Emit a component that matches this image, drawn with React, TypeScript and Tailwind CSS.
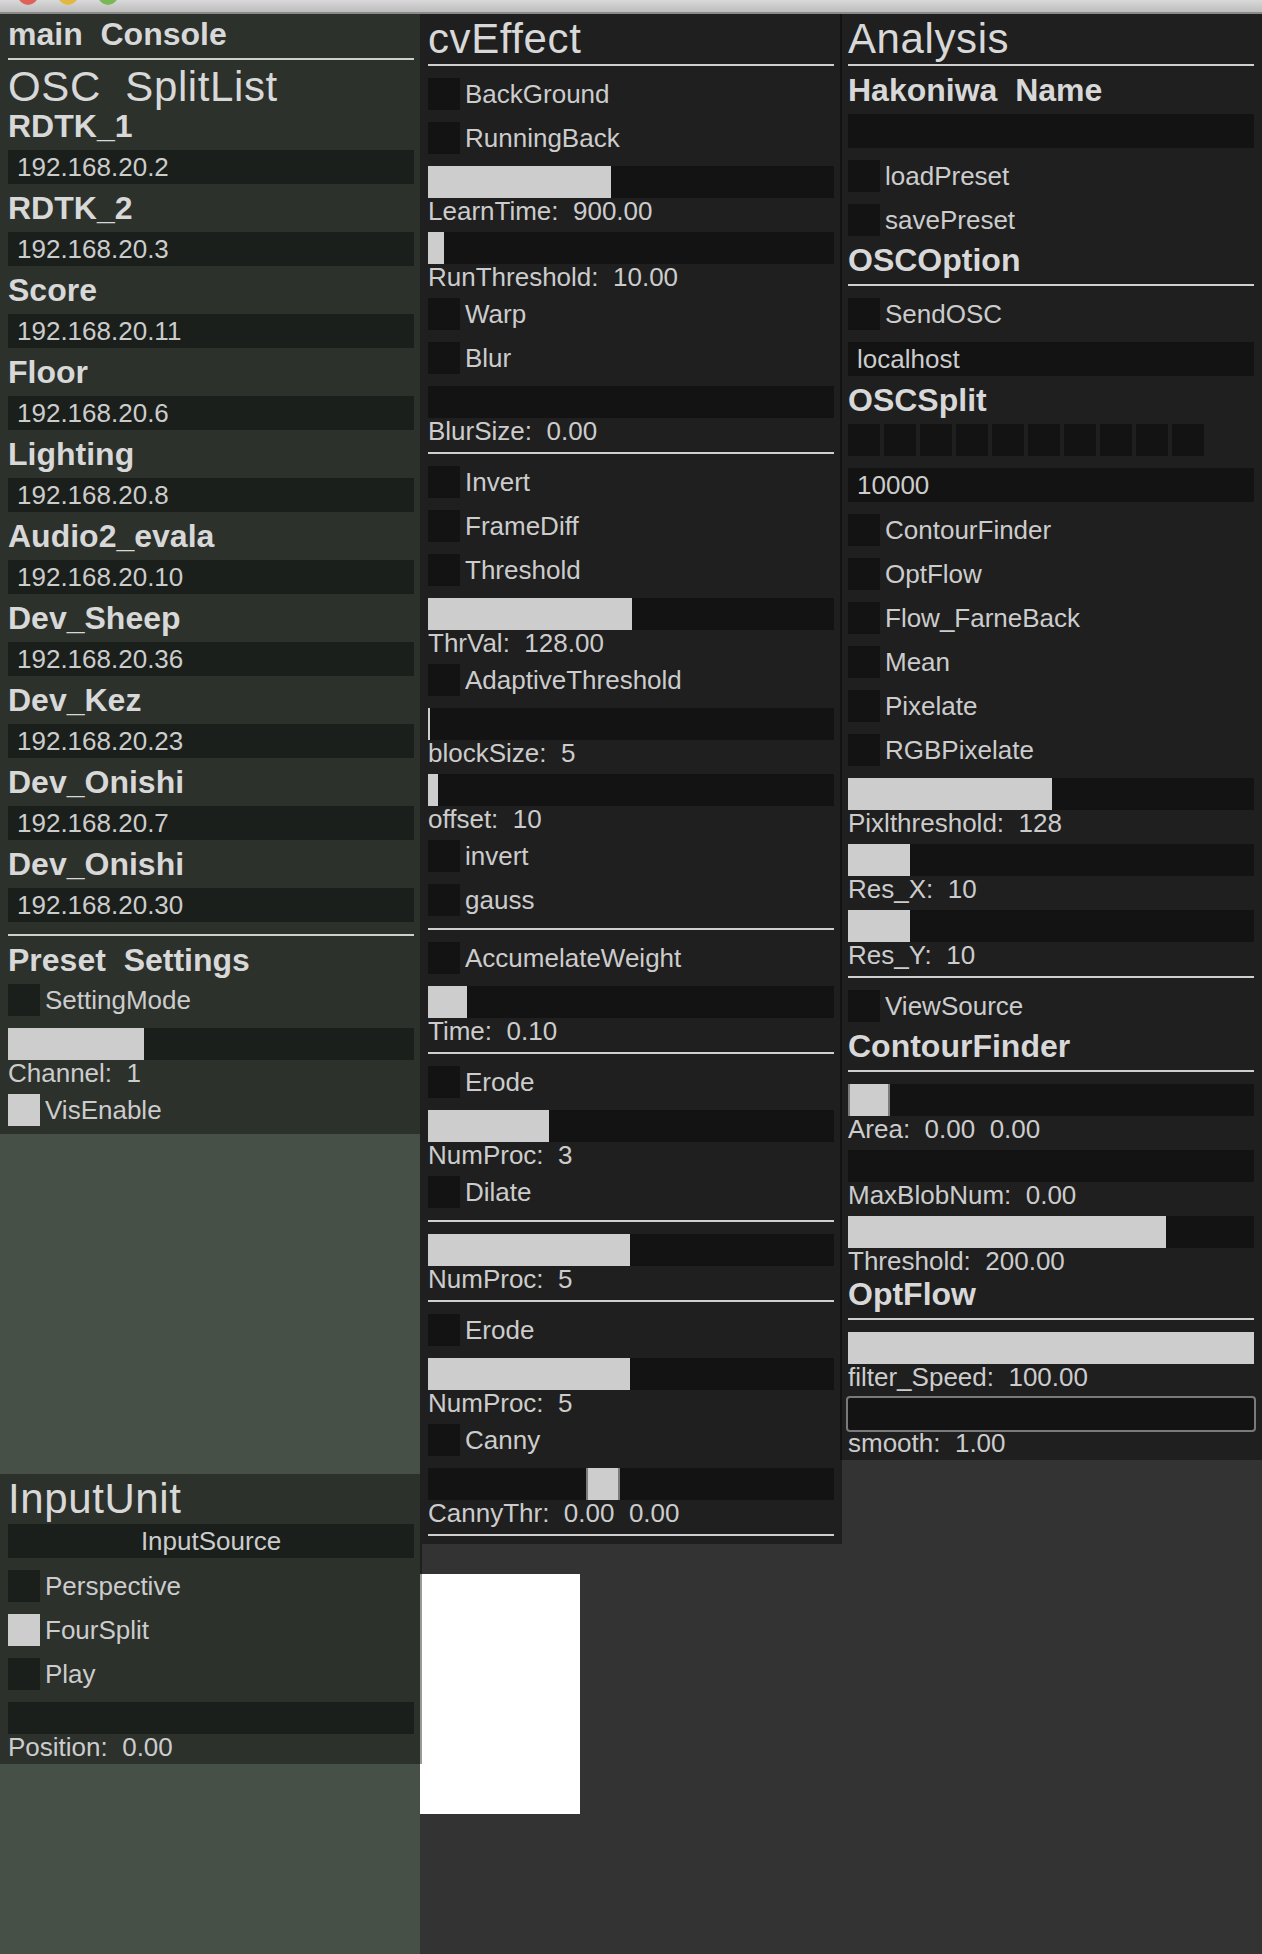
import React from "react";

type Tone = "green" | "dark";

const boxTone = (tone: Tone) => (tone === "green" ? "bg-[#1b1f1b]" : "bg-[#131313]");

const Sep = () => <div className="h-[2px] bg-[#cfcfcf]" />;

const BigTitle = ({ text, h }: { text: string; h: string }) => (
    <div className={`${h} whitespace-pre text-[42px] tracking-[0.6px] text-[#d8d8d8]`}>{text}</div>
);

const Head = ({ text, h }: { text: string; h: string }) => (
    <div className={`${h} whitespace-pre text-[32px] font-bold text-[#d8d8d8]`}>{text}</div>
);

const Toggle = ({ label, on = false, tone }: { label: string; on?: boolean; tone: Tone }) => (
    <div className="flex h-8 items-center gap-[5px]">
        <div className={`h-8 w-8 shrink-0 ${on ? "bg-[#cdcdcd]" : boxTone(tone)}`} />
        <span className="whitespace-pre text-[26px] leading-8">{label}</span>
    </div>
);

const Field = ({ value, tone, center = false }: { value: string; tone: Tone; center?: boolean }) => (
    <div className={`h-[34px] px-[9px] text-[26px] leading-[34px] ${boxTone(tone)} ${center ? "text-center" : ""}`}>
        {value}
    </div>
);

const Slider = ({ label, fill, tone, focus = false }: { label: string; fill: number; tone: Tone; focus?: boolean }) => (
    <div className="flex flex-col">
        <div className={`h-8 ${boxTone(tone)} ${focus ? "rounded-[2px] outline-2 outline-[#7a7a7a]" : ""}`}>
            <div className="h-full bg-[#cdcdcd]" style={{ width: fill }} />
        </div>
        <div className="h-[22px] whitespace-pre text-[26px] leading-[26px]">{label}</div>
    </div>
);

const Range = ({ label, left, width }: { label: string; left: number; width: number }) => (
    <div className="flex flex-col">
        <div className="relative h-8 bg-[#131313]">
            <div className="absolute top-0 h-8 border-x-2 border-[#7c7c7c] bg-[#cdcdcd]" style={{ left, width }} />
        </div>
        <div className="h-[22px] whitespace-pre text-[26px] leading-[26px]">{label}</div>
    </div>
);

const hosts = [
    ["RDTK_1", "192.168.20.2"],
    ["RDTK_2", "192.168.20.3"],
    ["Score", "192.168.20.11"],
    ["Floor", "192.168.20.6"],
    ["Lighting", "192.168.20.8"],
    ["Audio2_evala", "192.168.20.10"],
    ["Dev_Sheep", "192.168.20.36"],
    ["Dev_Kez", "192.168.20.23"],
    ["Dev_Onishi", "192.168.20.7"],
    ["Dev_Onishi", "192.168.20.30"],
];

const TitleBar = () => (
    <div className="flex h-[14px] shrink-0 items-start gap-5 overflow-hidden border-b-2 border-[#8a8a8a] bg-linear-to-b from-[#d9d9d9] to-[#bdbdbd] pl-[18px]">
        <div className="-mt-[15px] h-5 w-5 shrink-0 rounded-full bg-[#e0605a]" />
        <div className="-mt-[15px] h-5 w-5 shrink-0 rounded-full bg-[#e2b83f]" />
        <div className="-mt-[15px] h-5 w-5 shrink-0 rounded-full bg-[#78b857]" />
    </div>
);

const leftPanel = "relative z-10 w-[422px] border-r-2 border-black/40 bg-[#2c312c] bg-clip-padding pl-2 pr-1.5 pb-2";

const MainConsole = () => (
    <div className={`${leftPanel} flex flex-col`}>
        <div className="h-10 whitespace-pre text-[32px] font-bold leading-10 text-[#d8d8d8]">main  Console</div>
        <div className="mt-1">
            <Sep />
        </div>
        <BigTitle text="OSC  SplitList" h="h-[54px] leading-[54px]" />
        <div className="flex flex-col gap-3">
            {hosts.map(([name, ip], i) => (
                <div key={i} className="flex flex-col">
                    <div className="h-6 text-[32px] font-bold leading-6 text-[#d8d8d8]">{name}</div>
                    <div className="mt-3">
                        <Field value={ip} tone="green" />
                    </div>
                </div>
            ))}
        </div>
        <div className="mt-3">
            <Sep />
        </div>
        <Head text="Preset  Settings" h="h-12 leading-[48px]" />
        <Toggle label="SettingMode" tone="green" />
        <div className="mt-3">
            <Slider label="Channel:  1" fill={136} tone="green" />
        </div>
        <div className="mt-3">
            <Toggle label="VisEnable" on tone="green" />
        </div>
    </div>
);

const InputUnit = () => (
    <div className={`${leftPanel} mt-[340px] flex flex-col`}>
        <BigTitle text="InputUnit" h="h-[50px] leading-[50px]" />
        <Field value="InputSource" tone="green" center />
        <div className="mt-3 flex flex-col gap-3">
            <Toggle label="Perspective" tone="green" />
            <Toggle label="FourSplit" on tone="green" />
            <Toggle label="Play" tone="green" />
            <Slider label="Position:  0.00" fill={0} tone="green" />
        </div>
    </div>
);

const CvEffect = () => (
    <div className="relative z-10 flex w-[422px] flex-col border-r-2 border-black/40 bg-[#1f1f1f] bg-clip-padding pb-2 pl-2 pr-1.5">
        <BigTitle text="cvEffect" h="h-[50px] leading-[50px]" />
        <Sep />
        <div className="mt-3 flex flex-col gap-3">
            <Toggle label="BackGround" tone="dark" />
            <Toggle label="RunningBack" tone="dark" />
            <Slider label="LearnTime:  900.00" fill={183} tone="dark" />
            <Slider label="RunThreshold:  10.00" fill={16} tone="dark" />
            <Toggle label="Warp" tone="dark" />
            <Toggle label="Blur" tone="dark" />
            <Slider label="BlurSize:  0.00" fill={0} tone="dark" />
            <Sep />
            <Toggle label="Invert" tone="dark" />
            <Toggle label="FrameDiff" tone="dark" />
            <Toggle label="Threshold" tone="dark" />
            <Slider label="ThrVal:  128.00" fill={204} tone="dark" />
            <Toggle label="AdaptiveThreshold" tone="dark" />
            <Slider label="blockSize:  5" fill={2} tone="dark" />
            <Slider label="offset:  10" fill={10} tone="dark" />
            <Toggle label="invert" tone="dark" />
            <Toggle label="gauss" tone="dark" />
            <Sep />
            <Toggle label="AccumelateWeight" tone="dark" />
            <Slider label="Time:  0.10" fill={39} tone="dark" />
            <Sep />
            <Toggle label="Erode" tone="dark" />
            <Slider label="NumProc:  3" fill={121} tone="dark" />
            <Toggle label="Dilate" tone="dark" />
            <Sep />
            <Slider label="NumProc:  5" fill={202} tone="dark" />
            <Sep />
            <Toggle label="Erode" tone="dark" />
            <Slider label="NumProc:  5" fill={202} tone="dark" />
            <Toggle label="Canny" tone="dark" />
            <Range label="CannyThr:  0.00  0.00" left={158} width={34} />
            <Sep />
        </div>
    </div>
);

const Analysis = () => (
    <div className="flex w-full flex-col bg-[#1f1f1f] px-2 pb-2">
        <BigTitle text="Analysis" h="h-[50px] leading-[50px]" />
        <Sep />
        <div className="flex flex-col gap-3">
            <div className="flex flex-col">
                <Head text="Hakoniwa  Name" h="h-12 leading-[48px]" />
                <Field value="" tone="dark" />
            </div>
            <Toggle label="loadPreset" tone="dark" />
            <Toggle label="savePreset" tone="dark" />
            <div className="-mt-3 flex flex-col">
                <Head text="OSCOption" h="h-12 leading-[48px]" />
                <Sep />
            </div>
            <Toggle label="SendOSC" tone="dark" />
            <Field value="localhost" tone="dark" />
            <div className="-mt-3 flex flex-col">
                <Head text="OSCSplit" h="h-12 leading-[48px]" />
                <div className="flex gap-1">
                    {Array.from({ length: 10 }).map((_, i) => (
                        <div key={i} className="h-8 w-8 bg-[#131313]" />
                    ))}
                </div>
            </div>
            <Field value="10000" tone="dark" />
            <Toggle label="ContourFinder" tone="dark" />
            <Toggle label="OptFlow" tone="dark" />
            <Toggle label="Flow_FarneBack" tone="dark" />
            <Toggle label="Mean" tone="dark" />
            <Toggle label="Pixelate" tone="dark" />
            <Toggle label="RGBPixelate" tone="dark" />
            <Slider label="Pixlthreshold:  128" fill={204} tone="dark" />
            <Slider label="Res_X:  10" fill={62} tone="dark" />
            <Slider label="Res_Y:  10" fill={62} tone="dark" />
            <Sep />
            <Toggle label="ViewSource" tone="dark" />
            <div className="-mt-3 flex flex-col">
                <Head text="ContourFinder" h="h-12 leading-[48px]" />
                <Sep />
            </div>
            <Range label="Area:  0.00  0.00" left={0} width={42} />
            <Slider label="MaxBlobNum:  0.00" fill={0} tone="dark" />
            <Slider label="Threshold:  200.00" fill={318} tone="dark" />
            <div className="-mt-3 flex flex-col">
                <Head text="OptFlow" h="h-12 leading-[48px]" />
                <Sep />
            </div>
            <Slider label="filter_Speed:  100.00" fill={406} tone="dark" />
            <Slider label="smooth:  1.00" fill={0} tone="dark" focus />
        </div>
    </div>
);

export default function App() {
    return (
        <div className="flex h-[1954px] flex-col overflow-hidden bg-[#333333] font-['Liberation_Sans',Arial,sans-serif] text-[#cccccc]">
            <TitleBar />
            <div className="flex flex-1">
                <div className="flex w-[420px] shrink-0 flex-col bg-[#465046]">
                    <MainConsole />
                    <InputUnit />
                </div>
                <div className="flex w-[420px] shrink-0 flex-col">
                    <CvEffect />
                    <div className="mt-[30px] h-[240px] w-[160px] bg-white" />
                </div>
                <div className="flex w-[422px] shrink-0 flex-col">
                    <Analysis />
                </div>
            </div>
        </div>
    );
}
